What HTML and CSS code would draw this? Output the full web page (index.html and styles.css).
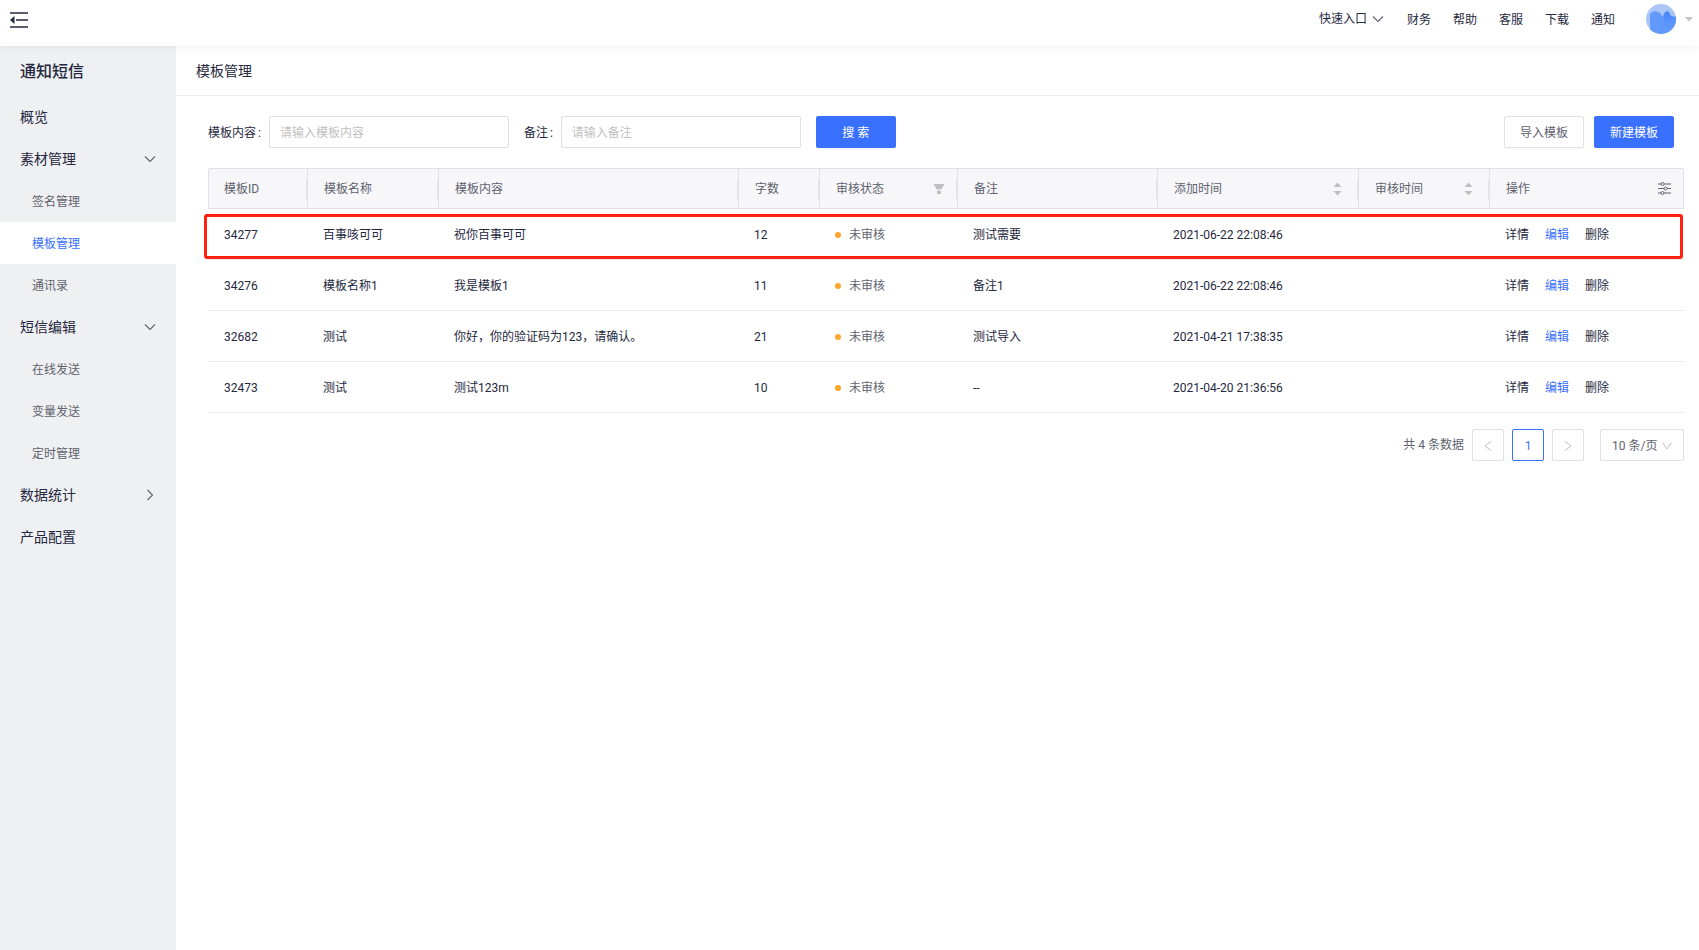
FILE: index.html
```html
<!DOCTYPE html>
<html lang="zh-CN">
<head>
<meta charset="UTF-8">
<meta name="viewport" content="width=device-width, initial-scale=1.0">
<title>模板管理</title>
<link rel="stylesheet" href="styles.css">
</head>
<body>

<svg class="sprite">
    <symbol id="down" viewBox="0 0 12 12"><path d="M1 3.5 L6 8.5 L11 3.5" fill="none" stroke="currentColor" stroke-width="1.1"/></symbol>
    <symbol id="right" viewBox="0 0 12 12"><path d="M3.5 1 L8.5 6 L3.5 11" fill="none" stroke="currentColor" stroke-width="1.1"/></symbol>
    <symbol id="left" viewBox="0 0 12 12"><path d="M9 1.5 L3 6 L9 10.5" fill="none" stroke="currentColor" stroke-width="1"/></symbol>
    <symbol id="next" viewBox="0 0 12 12"><path d="M3 1.5 L9 6 L3 10.5" fill="none" stroke="currentColor" stroke-width="1"/></symbol>
    <symbol id="open" viewBox="0 0 12 12"><path d="M1.5 2.5 L6 9 L10.5 2.5" fill="none" stroke="currentColor" stroke-width="1"/></symbol>
    <symbol id="sort" viewBox="0 0 9 14"><path d="M4.5 0.5 L8.5 5 H0.5 Z M4.5 13.5 L8.5 9 H0.5 Z" fill="currentColor"/></symbol>
</svg>

<header class="topbar">
    <button class="fold" type="button" aria-label="收起菜单">
        <svg width="18" height="16" viewBox="0 0 18 16"><path d="M0 1 H18 M6 8 H18 M0 15 H18" stroke="currentColor" stroke-width="1.6"/><path d="M0 8 L4.5 4 V12 Z" fill="currentColor"/></svg>
    </button>
    <nav class="toplinks">
        <a class="quick" href="#">快速入口<svg width="12" height="12"><use href="#down"/></svg></a>
        <a href="#">财务</a>
        <a href="#">帮助</a>
        <a href="#">客服</a>
        <a href="#">下载</a>
        <a href="#">通知</a>
    </nav>
    <button class="user" type="button" aria-label="账户">
        <svg width="30" height="30" viewBox="0 0 30 30">
            <defs>
                <clipPath id="round"><circle cx="15" cy="15" r="15"/></clipPath>
                <linearGradient id="wave" x1="0" y1="0" x2="0" y2="1"><stop offset="0" stop-color="#4583f8"/><stop offset="1" stop-color="#6ea3fc"/></linearGradient>
            </defs>
            <g clip-path="url(#round)">
                <rect width="30" height="30" fill="#a9c6f7"/>
                <path d="M4 30 V11 C5 7 12 6 15 11 C17 14 17 12 18 10 C20 6 23 7 24 10 C25 13 28 13 30 12 V30 Z" fill="url(#wave)"/>
                <path d="M4 11 C5 7 12 6 15 11 C17 14 17 12 18 10 V19 C18 23 16 25 13 25 H4 Z" fill="#6399fb"/>
                <path d="M0 24 C2 26 8 25 13 25 C17 25 18 22 18 18 L30 13 V30 H0 Z" fill="#5c94fb" opacity=".6"/>
            </g>
        </svg>
        <svg class="caret" width="8" height="5" viewBox="0 0 8 5"><path d="M0 0 H8 L4 4.5 Z" fill="currentColor"/></svg>
    </button>
</header>

<div class="layout">
    <aside class="sidebar">
        <h2>通知短信</h2>
        <a class="item" href="#">概览</a>
        <a class="item" href="#">素材管理<svg width="12" height="12"><use href="#down"/></svg></a>
        <a class="item sub" href="#">签名管理</a>
        <a class="item sub active" href="#">模板管理</a>
        <a class="item sub" href="#">通讯录</a>
        <a class="item" href="#">短信编辑<svg width="12" height="12"><use href="#down"/></svg></a>
        <a class="item sub" href="#">在线发送</a>
        <a class="item sub" href="#">变量发送</a>
        <a class="item sub" href="#">定时管理</a>
        <a class="item" href="#">数据统计<svg width="12" height="12"><use href="#right"/></svg></a>
        <a class="item" href="#">产品配置</a>
    </aside>

    <main class="main">
        <h1>模板管理</h1>

        <div class="content">
            <form class="filters">
                <label for="tpl">模板内容<span class="colon">:</span></label>
                <input id="tpl" type="text" placeholder="请输入模板内容">
                <label for="note">备注<span class="colon">:</span></label>
                <input id="note" type="text" placeholder="请输入备注">
                <button class="btn primary" type="button">搜 索</button>
                <div class="actions">
                    <button class="btn" type="button">导入模板</button>
                    <button class="btn primary" type="button">新建模板</button>
                </div>
            </form>

            <div class="table-wrap">
                <table>
                    <colgroup>
                        <col class="w-id"><col class="w-name"><col><col class="w-count"><col class="w-status">
                        <col class="w-note"><col class="w-added"><col class="w-audit"><col class="w-ops">
                    </colgroup>
                    <thead>
                        <tr>
                            <th>模板ID</th>
                            <th>模板名称</th>
                            <th>模板内容</th>
                            <th>字数</th>
                            <th><div class="head filter">审核状态<svg width="12" height="12" viewBox="0 0 12 12"><path d="M0.5 1 H11.5 L8.3 6.5 H3.7 Z M4 7.8 H8 V11 H4 Z" fill="currentColor"/></svg></div></th>
                            <th>备注</th>
                            <th><div class="head">添加时间<svg width="9" height="14"><use href="#sort"/></svg></div></th>
                            <th><div class="head">审核时间<svg width="9" height="14"><use href="#sort"/></svg></div></th>
                            <th><div class="head setting">操作<svg width="13" height="13" viewBox="0 0 13 13" fill="none" stroke="currentColor"><path d="M0 2 H3 M6 2 H13 M0 6.5 H6 M9 6.5 H13 M0 11 H3 M6 11 H13"/><circle cx="4.5" cy="2" r="1.5"/><circle cx="7.5" cy="6.5" r="1.5"/><circle cx="4.5" cy="11" r="1.5"/></svg></div></th>
                        </tr>
                    </thead>
                    <tbody>
                        <tr>
                            <td>34277</td><td>百事咳可可</td><td>祝你百事可可</td><td>12</td>
                            <td><span class="status">未审核</span></td><td>测试需要</td><td>2021-06-22 22:08:46</td><td></td>
                            <td><div class="ops"><a href="#">详情</a><a class="edit" href="#">编辑</a><a href="#">删除</a></div></td>
                        </tr>
                        <tr>
                            <td>34276</td><td>模板名称1</td><td>我是模板1</td><td>11</td>
                            <td><span class="status">未审核</span></td><td>备注1</td><td>2021-06-22 22:08:46</td><td></td>
                            <td><div class="ops"><a href="#">详情</a><a class="edit" href="#">编辑</a><a href="#">删除</a></div></td>
                        </tr>
                        <tr>
                            <td>32682</td><td>测试</td><td>你好，你的验证码为123，请确认。</td><td>21</td>
                            <td><span class="status">未审核</span></td><td>测试导入</td><td>2021-04-21 17:38:35</td><td></td>
                            <td><div class="ops"><a href="#">详情</a><a class="edit" href="#">编辑</a><a href="#">删除</a></div></td>
                        </tr>
                        <tr>
                            <td>32473</td><td>测试</td><td>测试123m</td><td>10</td>
                            <td><span class="status">未审核</span></td><td>--</td><td>2021-04-20 21:36:56</td><td></td>
                            <td><div class="ops"><a href="#">详情</a><a class="edit" href="#">编辑</a><a href="#">删除</a></div></td>
                        </tr>
                    </tbody>
                </table>
                <div class="marker"></div>
            </div>

            <div class="pager">
                <span>共 4 条数据</span>
                <button type="button" aria-label="上一页" disabled><svg width="12" height="12"><use href="#left"/></svg></button>
                <button class="current" type="button">1</button>
                <button type="button" aria-label="下一页" disabled><svg width="12" height="12"><use href="#next"/></svg></button>
                <div class="size">
                    <select aria-label="每页条数"><option>10 条/页</option></select>
                    <svg width="12" height="12"><use href="#open"/></svg>
                </div>
            </div>
        </div>
    </main>
</div>

</body>
</html>
```
FILE: styles.css
```css
* { box-sizing: border-box; }
body {
    margin: 0;
    min-height: 100vh;
    display: flex;
    flex-direction: column;
    font: 12px/20px Roboto, "Noto Sans CJK SC", sans-serif;
    color: #252840;
    background: #fff;
}
a { color: inherit; text-decoration: none; }
button, input, select { font: inherit; color: inherit; }
.sprite { display: none; }

/* Top bar */
.topbar {
    position: relative;
    height: 46px;
    padding: 0 6px 8px 10px;
    display: flex;
    align-items: center;
    background: #fff;
    box-shadow: 0 2px 8px rgba(0, 0, 0, 0.05);
}
.fold, .user { border: 0; padding: 0; background: none; display: flex; align-items: center; }
.fold { padding-top: 2px; }
.toplinks { margin-left: auto; padding-top: 2px; display: flex; align-items: center; gap: 22px; }
.quick { display: flex; align-items: center; gap: 5px; padding-bottom: 3px; margin-right: 1px; }
.quick svg { color: #60626e; }
.user { margin-left: 31px; gap: 9px; }
.caret { color: #c0c3cf; }

.layout { flex: 1; display: flex; }

/* Sidebar */
.sidebar { width: 176px; flex-shrink: 0; background: #eff0f2; }
.sidebar h2 { margin: 0; padding: 1px 20px 0; font-size: 16px; line-height: 49px; font-weight: 500; }
.item {
    height: 42px;
    padding: 0 20px;
    display: flex;
    align-items: center;
    justify-content: space-between;
    font-size: 14px;
}
.item svg { color: #60626e; }
.sub { padding: 2px 20px 0 32px; font-size: 12px; color: #60626e; }
.active { background: #fff; color: #3a70ff; }

/* Main */
.main { flex: 1; min-width: 0; }
.main h1 {
    margin: 0;
    padding: 1px 20px 0;
    font-size: 14px;
    line-height: 48px;
    font-weight: 400;
    border-bottom: 1px solid #ebecee;
}
.content { padding: 20px 15px 20px 32px; }

.filters { display: flex; align-items: center; margin-bottom: 20px; padding-right: 10px; }
.filters label { padding-top: 2px; }
.colon { margin: 0 8px 0 2px; }
.filters input {
    width: 240px;
    height: 32px;
    padding: 2px 10px 0;
    margin-right: 15px;
    border: 1px solid #dfe1e6;
    border-radius: 2px;
}
.filters input::placeholder { color: #bfbfbf; }
.btn {
    width: 80px;
    height: 32px;
    padding: 2px 0 0;
    border: 1px solid #dfe1e6;
    border-radius: 2px;
    background: #fff;
    color: #60626e;
    box-shadow: 0 2px 0 rgba(0, 0, 0, 0.02);
}
.primary { background: #3a70ff; border-color: #3a70ff; color: #fff; }
.actions { margin-left: auto; display: flex; gap: 10px; }

/* Table */
.table-wrap { position: relative; }
table { width: 100%; table-layout: fixed; border-spacing: 0; border-collapse: separate; }
.w-id { width: 100px; }
.w-name { width: 131px; }
.w-count { width: 81px; }
.w-status { width: 138px; }
.w-note { width: 200px; }
.w-added { width: 201px; }
.w-audit { width: 131px; }
.w-ops { width: 194px; }
th {
    height: 41px;
    padding: 0 16px;
    text-align: left;
    font-weight: 400;
    color: #60626e;
    background: linear-gradient(#e6e6ea, #e6e6ea) right center / 1px 20px no-repeat #f7f7fa;
    border: solid #dfe1e6;
    border-width: 1px 1px 1px 0;
}
th:first-child { padding-left: 15px; border-left-width: 1px; border-top-left-radius: 2px; }
th:last-child { border-top-right-radius: 2px; background: #f7f7fa; }
.head { display: flex; align-items: center; justify-content: space-between; }
.head svg { color: #bfbfbf; }
.filter, .setting { margin-right: -4px; }
.head.setting svg { color: #60626e; }
td { height: 51px; padding: 2px 15px 0; border-bottom: 1px solid #ebecee; }
td:first-child { padding-left: 16px; }
.status { display: flex; align-items: center; gap: 8px; color: #60626e; }
.status::before { content: ""; width: 6px; height: 6px; border-radius: 50%; background: #ffa62b; }
.ops { display: flex; gap: 16px; }
.edit { color: #3a70ff; }
.marker {
    position: absolute;
    top: 46px;
    left: -4px;
    right: 1px;
    height: 45px;
    border: 3px solid #ff2010;
    border-radius: 3px;
    pointer-events: none;
}

/* Pagination */
.pager { margin-top: 16px; display: flex; justify-content: flex-end; align-items: center; gap: 8px; color: #60626e; }
.pager button {
    width: 32px;
    height: 32px;
    padding: 2px 0 0;
    display: flex;
    align-items: center;
    justify-content: center;
    border: 1px solid #dfe1e6;
    border-radius: 2px;
    background: #fff;
}
.pager button:disabled, .size svg { color: #bfbfbf; }
.pager .current { border-color: #3a70ff; color: #3a70ff; }
.size { position: relative; margin-left: 8px; }
.size select {
    appearance: none;
    width: 84px;
    height: 32px;
    padding: 2px 11px 0;
    border: 1px solid #dfe1e6;
    border-radius: 2px;
    background: #fff;
}
.size svg { position: absolute; right: 11px; top: 11px; pointer-events: none; }
```
